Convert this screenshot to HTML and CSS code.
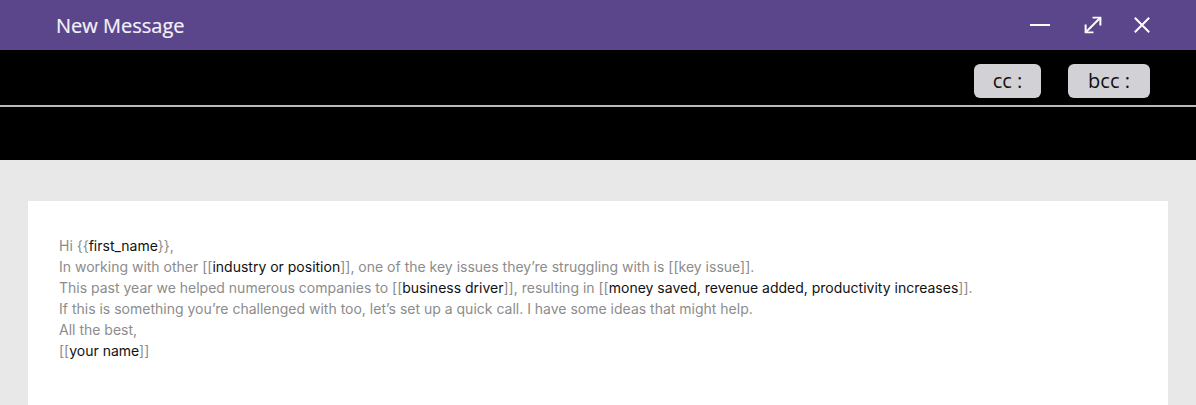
FILE: index.html
```html
<!DOCTYPE html>
<html>
<head>
  <meta charset="utf-8">
  <link rel="stylesheet" href="styles.css">
</head>
<body>
  <div class="composer">
    <div class="titlebar">
      <h1>New Message</h1>
      <div class="window-controls">
        <button class="ctrl ctrl-min" title="Minimize">
          <svg viewBox="0 0 20 20"><path d="M0 10H20" stroke="currentColor" stroke-width="2"/></svg>
        </button>
        <button class="ctrl ctrl-max" title="Expand">
          <svg viewBox="0 0 20 20" fill="none" stroke="currentColor" stroke-width="2.2">
            <path d="M2.5 17.5L17.5 2.5"/>
            <path d="M9.5 1.8H18.2V10.5"/>
            <path d="M1.8 9.5V18.2H10.5"/>
          </svg>
        </button>
        <button class="ctrl ctrl-close" title="Close">
          <svg viewBox="0 0 20 20" fill="none" stroke="currentColor" stroke-width="2.2">
            <path d="M2 2L18 18M18 2L2 18"/>
          </svg>
        </button>
      </div>
    </div>

    <div class="field field-to">
      <button class="chip chip-cc">cc :</button>
      <button class="chip chip-bcc">bcc :</button>
    </div>
    <div class="field field-subject"></div>

    <div class="editor">
      <div class="body-card">
        <p>Hi {{<b>first_name</b>}},</p>
        <p>In working with other [[<b>industry or position</b>]], one of the key issues they’re struggling with is [[key issue]].</p>
        <p>This past year we helped numerous companies to [[<b>business driver</b>]], resulting in [[<b>money saved, revenue added, productivity increases</b>]].</p>
        <p>If this is something you’re challenged with too, let’s set up a quick call. I have some ideas that might help.</p>
        <p>All the best,</p>
        <p>[[<b>your name</b>]]</p>
      </div>
    </div>
  </div>
</body>
</html>
```

FILE: styles.css
```css
* {
  margin: 0;
  padding: 0;
  box-sizing: border-box;
}

body {
  width: 1196px;
  height: 405px;
  overflow: hidden;
  background: #e8e8e8;
  font-family: "Open Sans", "Liberation Sans", sans-serif;
}

.composer {
  display: flex;
  flex-direction: column;
  height: 100%;
}

.titlebar {
  height: 50px;
  background: #5b468c;
  display: flex;
  align-items: center;
  justify-content: space-between;
  padding: 0 45px 0 56px;
  flex-shrink: 0;
}

.titlebar h1 {
  font-size: 20px;
  font-weight: 400;
  color: #f4f2f8;
  -webkit-text-stroke: 0.2px #f4f2f8;
}

.window-controls {
  display: flex;
  align-items: center;
}

.ctrl {
  background: none;
  border: none;
  color: #ffffff;
  display: flex;
  align-items: center;
  cursor: pointer;
}

.ctrl-min svg {
  width: 20px;
  height: 20px;
}

.ctrl-max {
  margin-left: 34px;
}

.ctrl-max svg {
  width: 18px;
  height: 18px;
}

.ctrl-close {
  margin-left: 31px;
}

.ctrl-close svg {
  width: 18px;
  height: 18px;
}

.field {
  background: #000;
  flex-shrink: 0;
}

.field-to {
  height: 57px;
  border-bottom: 2px solid #b9b9b9;
  display: flex;
  align-items: center;
  justify-content: flex-end;
  gap: 27px;
  padding: 6px 46px 0 0;
}

.chip {
  height: 34px;
  background: #d2d2d6;
  border: none;
  border-radius: 6px;
  font-family: "Open Sans", "Liberation Sans", sans-serif;
  font-size: 20px;
  color: #111;
  line-height: 34px;
}

.chip-cc {
  width: 67px;
}

.chip-bcc {
  width: 82px;
}

.field-subject {
  height: 53px;
}

.editor {
  flex: 1;
  padding: 41px 28px 0;
}

.body-card {
  background: #fff;
  height: 100%;
  padding: 34px 31px;
  font-family: Inter, "Liberation Sans", sans-serif;
  font-size: 14px;
  line-height: 21px;
  color: #8c8c8c;
}

.body-card b {
  font-weight: 400;
  color: #111;
}
```
